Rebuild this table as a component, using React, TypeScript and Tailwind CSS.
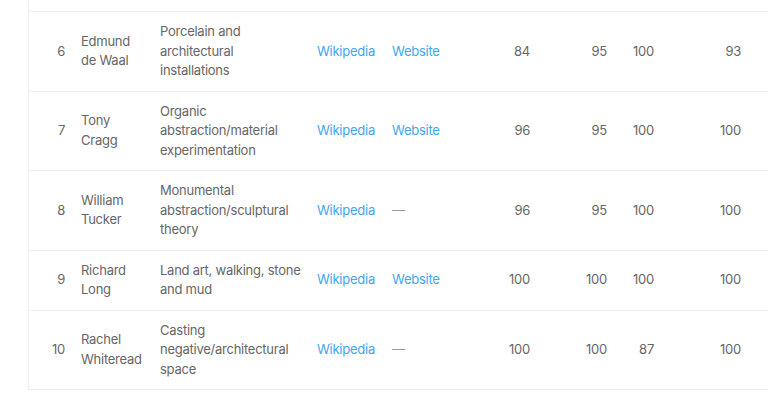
import React from "react";

type Row = {
  n: number;
  name: string[];
  desc: string[];
  site: boolean;
  a: number;
  b: number;
  c: number;
  d: number;
};

const rows: Row[] = [
  { n: 6, name: ["Edmund", "de Waal"], desc: ["Porcelain and", "architectural", "installations"], site: true, a: 84, b: 95, c: 100, d: 93 },
  { n: 7, name: ["Tony", "Cragg"], desc: ["Organic", "abstraction/material", "experimentation"], site: true, a: 96, b: 95, c: 100, d: 100 },
  { n: 8, name: ["William", "Tucker"], desc: ["Monumental", "abstraction/sculptural", "theory"], site: false, a: 96, b: 95, c: 100, d: 100 },
  { n: 9, name: ["Richard", "Long"], desc: ["Land art, walking, stone", "and mud"], site: true, a: 100, b: 100, c: 100, d: 100 },
  { n: 10, name: ["Rachel", "Whiteread"], desc: ["Casting", "negative/architectural", "space"], site: false, a: 100, b: 100, c: 87, d: 100 },
];

const grid = "grid grid-cols-[44px_79px_157px_75px_86px_68px_77px_47px_87px_60px] items-center";

export default function App() {
  return (
    <div
      className="w-[768px] h-[396px] overflow-hidden bg-white text-[13px] leading-[19.5px] tracking-[-0.25px] text-[#666]"
      style={{ fontFamily: "Inter, 'Noto Sans', sans-serif" }}
    >
      <div className="ml-[28px] border-l border-[#eeeeee] w-[820px]">
        <div className="h-[12px] border-b border-[#eeeeee]" />
        {rows.map((r) => (
          <div key={r.n} className={`${grid} border-b border-[#eeeeee] py-2.5`}>
            <div className="pr-2 text-right">{r.n}</div>
            <div className="px-2">
              {r.name.map((l) => (
                <div key={l}>{l}</div>
              ))}
            </div>
            <div className="px-2">
              {r.desc.map((l) => (
                <div key={l} className="whitespace-nowrap">{l}</div>
              ))}
            </div>
            <div className="px-2 text-[#42a5f5]">Wikipedia</div>
            <div className="px-2">
              {r.site ? <span className="text-[#42a5f5]">Website</span> : <span className="text-[#999]">—</span>}
            </div>
            <div className="px-2 text-right">{r.a}</div>
            <div className="px-2 text-right">{r.b}</div>
            <div className="px-2 text-right">{r.c}</div>
            <div className="px-2 text-right">{r.d}</div>
            <div />
          </div>
        ))}
      </div>
    </div>
  );
}
